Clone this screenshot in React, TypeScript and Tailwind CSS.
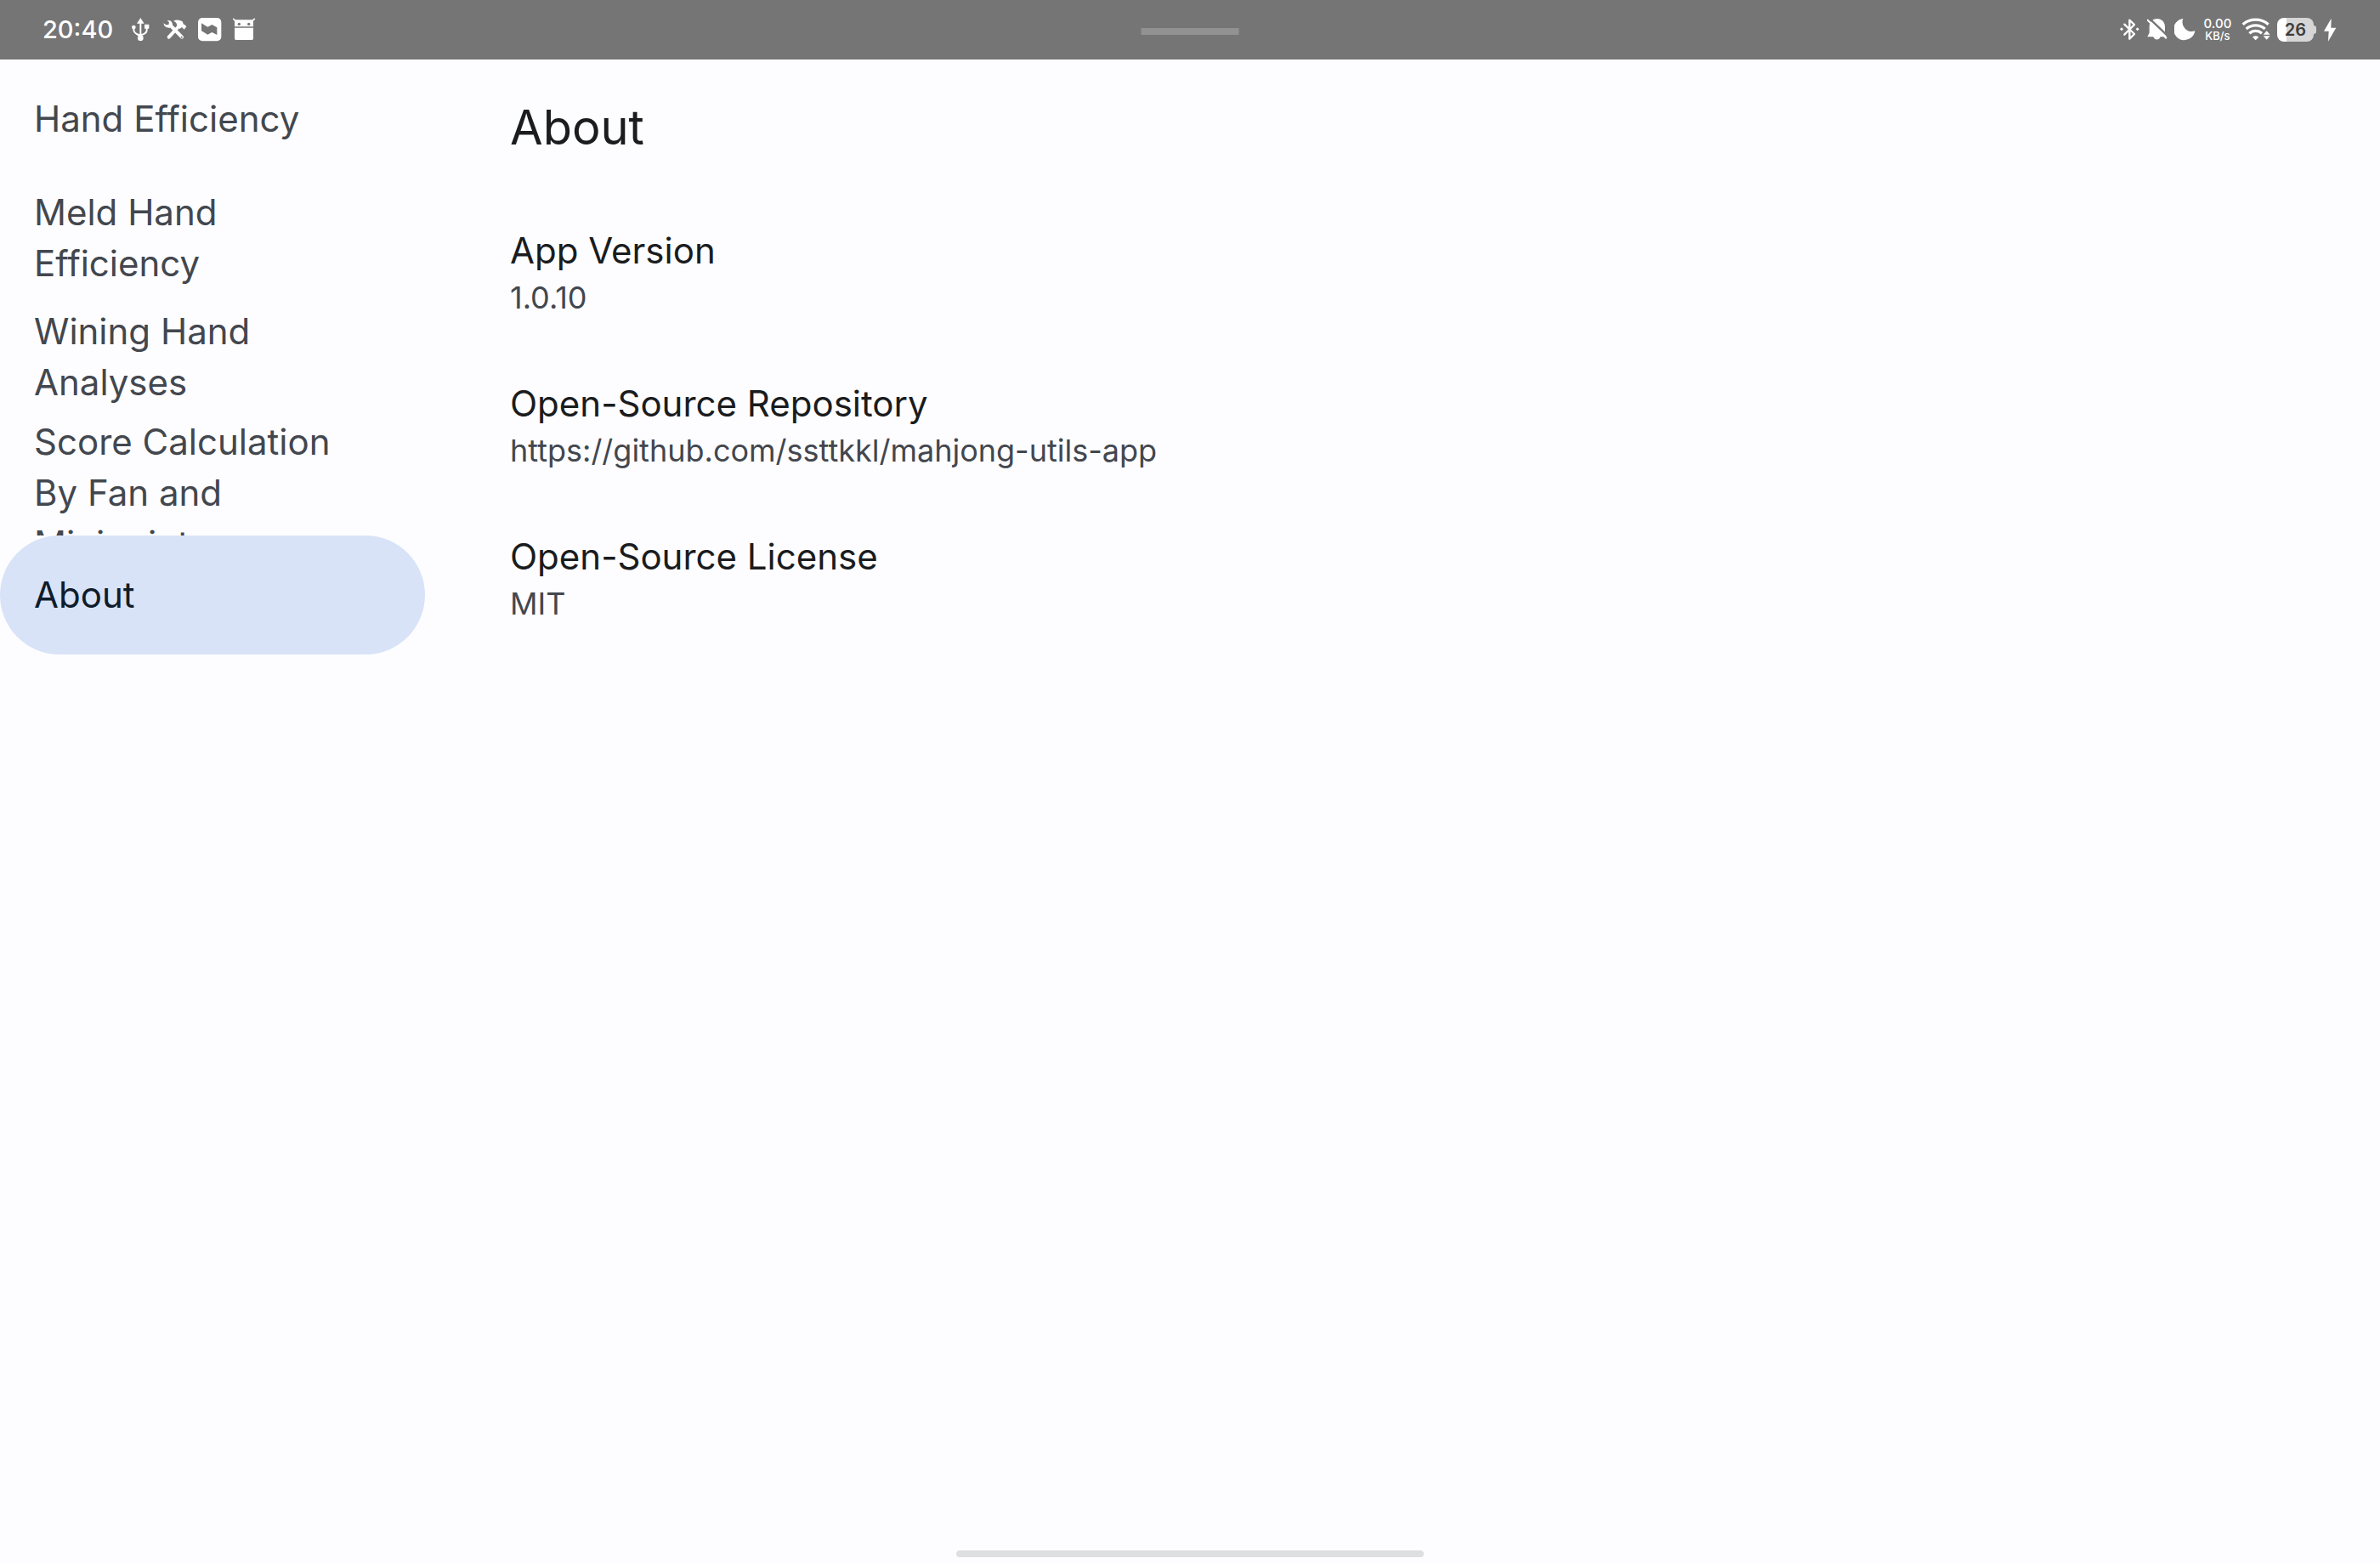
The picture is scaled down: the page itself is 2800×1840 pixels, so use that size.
import type { ReactNode } from "react";

type IconProps = { viewBox: string; className: string; label: string; children: ReactNode };

function StatusIcon({ viewBox, className, label, children }: IconProps) {
  return (
    <svg viewBox={viewBox} className={className} fill="currentColor" role="img" aria-label={label}>
      {children}
    </svg>
  );
}

function StatusBar() {
  return (
    <header className="relative flex h-[70px] items-center justify-between bg-[#757575] pr-[51px] pl-[50px] text-white">
      <div className="flex items-center gap-[18px]">
        <time className="text-[29px] leading-9 font-medium">20:40</time>
        <div className="flex items-center gap-[13px]">
          <StatusIcon viewBox="0 3 84 84" className="size-7" label="USB">
            <path d="M43 3 56 23H46V60Q62 56 62 46V41H57V26H73V41H68V47Q68 60 46 66V70H40V68Q16 60 16 45V40H22V45Q22 56 40 61V23H30Z" />
            <circle cx="43" cy="74" r="10" />
            <circle cx="19" cy="36" r="7" />
          </StatusIcon>
          <StatusIcon viewBox="0 3 84 84" className="size-7" label="Developer tools">
            <path d="M20 71 52 36M26 30 66 71" stroke="currentColor" strokeWidth="12" strokeLinecap="round" fill="none" />
            <path d="M14 12Q32 10 33 28L24 38Q4 40 1 22L10 28 19 27 21 19Z" />
            <path d="M36 14Q52 6 68 16L72 26 76 27 82 34 74 44 66 36 58 42 48 30Q50 20 36 14Z" />
            <circle cx="65" cy="71" r="3" fill="#757575" />
          </StatusIcon>
          <StatusIcon viewBox="0 3 84 84" className="size-7" label="Notification">
            <rect x="0" y="3" width="82" height="82" rx="15" />
            <path d="M12 22 34 35 49 27 67 37V63L49 54 34 62 12 49Z" fill="#757575" />
          </StatusIcon>
          <StatusIcon viewBox="0 3 84 84" className="size-7" label="App notification">
            <path d="M2 7 9 13M76 7 69 13" stroke="currentColor" strokeWidth="5" strokeLinecap="round" />
            <path d="M6 10H72V34H6ZM6 38H72V76Q72 81 67 81H11Q6 81 6 76Z" />
            <circle cx="22" cy="25" r="5" fill="#757575" />
            <circle cx="56" cy="25" r="5" fill="#757575" />
          </StatusIcon>
        </div>
      </div>

      <div className="absolute top-[33px] left-1/2 h-2 w-[115px] -translate-x-1/2 bg-[#929292]" />

      <div className="flex items-center gap-2">
        <StatusIcon viewBox="0 3 72 84" className="h-7 w-6" label="Bluetooth connected">
          <path d="M16 26 51 60 34 77V11L51 27 16 62" fill="none" stroke="currentColor" strokeWidth="7" strokeLinecap="round" strokeLinejoin="round" />
          <path d="M6 37 12 43 6 49 0 43ZM62 37 68 43 62 49 56 43Z" />
        </StatusIcon>
        <StatusIcon viewBox="0 3 72 84" className="h-7 w-6" label="Notifications muted">
          <path d="M35 6C51 6 63 18 63 34V56L70 70H47A13 13 0 0 1 22 70H1L8 56V34C8 18 20 6 35 6Z" />
          <path d="M7 4 75 69" stroke="#757575" strokeWidth="7" />
          <path d="M2 11 67 74" stroke="currentColor" strokeWidth="6" strokeLinecap="round" />
        </StatusIcon>
        <StatusIcon viewBox="0 3 78 84" className="h-7 w-[26px]" label="Do not disturb">
          <path d="M31 6A38 38 0 1 0 73 49A33 33 0 0 1 31 6Z" />
        </StatusIcon>
        <div className="w-[34px] text-center">
          <div className="text-[15px] leading-[14px] font-medium">0.00</div>
          <div className="text-[13px] leading-[14px] font-medium">KB/s</div>
        </div>
        <StatusIcon viewBox="0 3 111 84" className="h-7 w-[37px]" label="Wi-Fi">
          <g fill="none" stroke="currentColor" strokeWidth="10">
            <path d="M14 26A70 70 0 0 1 104 26" />
            <path d="M26 42A50 50 0 0 1 92 42" />
            <path d="M37 58A32 32 0 0 1 81 58" />
          </g>
          <path d="M48 71A16 16 0 0 1 70 71L59 82Z" />
          <path d="M98 42 114 58V87H82V58Z" fill="#757575" />
          <path d="M98 49 110 62H86ZM86 67H110L98 80Z" />
        </StatusIcon>
        <div className="flex items-center" role="img" aria-label="Battery 26 percent">
          <div className="flex h-7 w-[43px] items-center justify-center rounded-lg bg-[linear-gradient(to_right,#ffffff_26%,#d6d6d6_26%)] text-[20px] leading-7 font-semibold text-[#3c3c3c]">
            26
          </div>
          <div className="h-2.5 w-[3px] rounded-r-sm bg-[#d6d6d6]" />
        </div>
        <StatusIcon viewBox="0 3 48 84" className="h-7 w-4" label="Charging">
          <path d="M29 5 3 50H20L18 86 46 38H28Z" />
        </StatusIcon>
      </div>
    </header>
  );
}

const destinations = [
  "Hand Efficiency",
  "Meld Hand Efficiency",
  "Wining Hand Analyses",
  "Score Calculation By Fan and Minipoint",
  "About",
];

function NavigationDrawer() {
  return (
    <nav className="w-[500px] shrink-0">
      {destinations.map((name) => {
        const selected = name === "About";
        return (
          <button
            key={name}
            type="button"
            aria-current={selected ? "page" : undefined}
            className={
              selected
                ? "flex h-[140px] w-full items-center rounded-full bg-[#d8e3f8] pr-[60px] pl-10 text-left text-[#101c2b]"
                : "flex h-[140px] w-full items-center overflow-hidden pr-[60px] pl-10 text-left text-[#43474e]"
            }
          >
            <span className="max-h-full text-[42px] leading-[60px]">{name}</span>
          </button>
        );
      })}
    </nav>
  );
}

const repository = "https://github.com/ssttkkl/mahjong-utils-app";

function Entry({ title, children }: { title: string; children: ReactNode }) {
  return (
    <div className="py-[35px]">
      <dt className="text-[42px] leading-[60px] text-[#1a1c1e]">{title}</dt>
      <dd className="text-[36px] leading-[50px] text-[#43474e]">{children}</dd>
    </div>
  );
}

export default function App() {
  return (
    <div className="flex min-h-screen flex-col bg-[#fdfdff] font-['Inter',sans-serif] font-normal">
      <StatusBar />
      <div className="flex grow">
        <NavigationDrawer />
        <main className="grow pl-[100px]">
          <h1 className="text-[56px] leading-[160px] text-[#1a1c1e]">About</h1>
          <dl>
            <Entry title="App Version">1.0.10</Entry>
            <Entry title="Open-Source Repository">
              <a href={repository}>{repository}</a>
            </Entry>
            <Entry title="Open-Source License">MIT</Entry>
          </dl>
        </main>
      </div>
      <footer className="flex justify-center pb-2">
        <div className="h-2 w-[550px] rounded-full bg-[#dedfe0]" />
      </footer>
    </div>
  );
}
